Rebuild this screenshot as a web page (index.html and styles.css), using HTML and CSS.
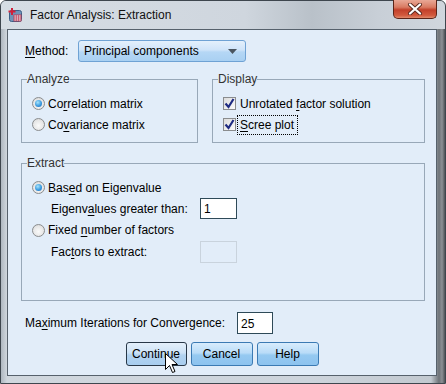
FILE: index.html
```html
<!DOCTYPE html>
<html lang="en">
<head>
  <meta charset="UTF-8">
  <title>Factor Analysis: Extraction</title>
  <link rel="stylesheet" href="styles.css">
</head>
<body>
  <div class="window">
    <div class="titlebar">
      <svg class="app-icon" width="15" height="16" viewBox="0 0 15 16">
        <rect x="1.5" y="3.5" width="12" height="11" rx="2" fill="#6f93b8" stroke="#3d5f86"/>
        <rect x="6" y="8" width="7" height="6" fill="#e8eef5" stroke="#c0304a" stroke-width="0.8"/>
        <path d="M6 10h7M6 12h7M8.3 8v6M10.6 8v6" stroke="#c0304a" stroke-width="0.7"/>
        <path d="M4 1v7M0.5 4.5h7" stroke="#d0203a" stroke-width="2"/>
      </svg>
      <span class="title">Factor Analysis: Extraction</span>
      <div class="close">
        <svg width="16" height="12" viewBox="0 0 16 12">
          <path d="M3 1.5l10 9M13 1.5l-10 9" stroke="#5a2a20" stroke-width="4" stroke-linecap="round"/>
          <path d="M3 1.5l10 9M13 1.5l-10 9" stroke="#fff" stroke-width="2.2" stroke-linecap="round"/>
        </svg>
      </div>
    </div>

    <div class="client">
      <div class="method-row">
        <span class="label"><u>M</u>ethod:</span>
        <div class="select">
          <span>Principal components</span>
          <svg width="9" height="5" viewBox="0 0 9 5"><path d="M0 0h9L4.5 5z" fill="#4a5560"/></svg>
        </div>
      </div>

      <div class="group-row">
        <fieldset class="group analyze">
          <legend>Analyze</legend>
          <div class="opt"><span class="radio checked"></span><span>Co<u>r</u>relation matrix</span></div>
          <div class="opt"><span class="radio"></span><span>Co<u>v</u>ariance matrix</span></div>
        </fieldset>
        <fieldset class="group display">
          <legend>Display</legend>
          <div class="opt"><span class="check"><svg width="11" height="11" viewBox="0 0 11 11"><path d="M1.5 5.5l3 3.5 5-8" fill="none" stroke="#1e2b82" stroke-width="2.2"/></svg></span><span>Unrotated <u>f</u>actor solution</span></div>
          <div class="opt"><span class="check"><svg width="11" height="11" viewBox="0 0 11 11"><path d="M1.5 5.5l3 3.5 5-8" fill="none" stroke="#1e2b82" stroke-width="2.2"/></svg></span><span class="focus"><u>S</u>cree plot</span></div>
        </fieldset>
      </div>

      <fieldset class="group extract">
        <legend>Extract</legend>
        <div class="opt"><span class="radio checked"></span><span>Bas<u>e</u>d on Eigenvalue</span></div>
        <div class="sub">
          <span class="sub-label">Eigenv<u>a</u>lues greater than:</span>
          <div class="field">1</div>
        </div>
        <div class="opt tall"><span class="radio"></span><span>Fixed <u>n</u>umber of factors</span></div>
        <div class="sub tall">
          <span class="sub-label">Fac<u>t</u>ors to extract:</span>
          <div class="field disabled"></div>
        </div>
      </fieldset>

      <div class="iter-row">
        <span>Ma<u>x</u>imum Iterations for Convergence:</span>
        <div class="field">25</div>
      </div>

      <div class="buttons">
        <button class="btn default">Continue</button>
        <button class="btn">Cancel</button>
        <button class="btn">Help</button>
      </div>
    </div>

    <svg class="cursor" width="13" height="21" viewBox="0 0 13 21">
      <path d="M0.5 0.5v16l4-4 3 7 2.5-1-3-7h5.5z" fill="#fff" stroke="#000" stroke-width="1"/>
    </svg>
  </div>
</body>
</html>
```

FILE: styles.css
```css
html, body {
  margin: 0;
  padding: 0;
}
body {
  width: 446px;
  height: 384px;
  overflow: hidden;
  font-family: "Liberation Sans", Arial, sans-serif;
  font-size: 12px;
  color: #000;
}
.window {
  position: relative;
  box-sizing: border-box;
  width: 446px;
  height: 384px;
  border: 1px solid #3e464e;
  border-radius: 6px 6px 0 0;
  background: linear-gradient(to right, #aeb7c0 0, #d0d7de 6px, #cdd4dc 70%, #c2c9d0 430px, #6e7378 438px, #8c9095 441px, #4e5256 100%);
  display: flex;
  flex-direction: column;
}
.titlebar {
  height: 28px;
  display: flex;
  align-items: center;
  padding-left: 7px;
  background: linear-gradient(to right, #d6dde4, #cfd6de 55%, #b9c1c9 70%, #c8cfd7 85%, #d0d6dd);
  border-radius: 5px 5px 0 0;
}
.app-icon {
  margin-top: -1px;
}
.title {
  margin-left: 7px;
  font-size: 12px;
  color: #111;
}
.close {
  margin-left: auto;
  margin-right: 8px;
  align-self: flex-start;
  margin-top: -1px;
  width: 44px;
  height: 19px;
  box-sizing: border-box;
  border: 1px solid #5b2418;
  border-top: none;
  border-radius: 0 0 5px 5px;
  background: linear-gradient(to bottom, #e9a896 0, #d97a62 40%, #c2402a 55%, #d2593d 85%, #e08a6c 100%);
  display: flex;
  align-items: center;
  justify-content: center;
}
.client {
  flex: 1;
  margin: 0 8px 7px 6px;
  border: 1px solid #56616c;
  background: #e2edf9;
  display: flex;
  flex-direction: column;
}
u {
  text-decoration: underline;
  text-underline-offset: 2px;
}
.method-row {
  display: flex;
  align-items: center;
  padding: 10px 0 0 17px;
  height: 22px;
}
.method-row .label {
  width: 53px;
}
.select {
  box-sizing: border-box;
  width: 168px;
  height: 22px;
  border: 1px solid #6fa2d4;
  border-radius: 3px;
  background: linear-gradient(to bottom, #e4f0fc 0, #cfe4f9 45%, #b5d7f5 55%, #a9d0f2 100%);
  display: flex;
  align-items: center;
  justify-content: space-between;
  padding: 0 8px 0 5px;
}
.group-row {
  display: flex;
  gap: 14px;
  margin: 10px 11px 0 13px;
}
.group {
  margin: 0;
  border: 1px solid #98a8b8;
  padding: 7px 0 7px 10px;
  min-width: 0;
}
.group legend {
  padding: 0;
  margin-left: -5px;
  line-height: 14px;
  color: #333;
}
.analyze {
  box-sizing: border-box;
  width: 177px;
}
.display {
  flex: 1;
}
.opt {
  display: flex;
  align-items: center;
  height: 21px;
}
.opt.tall {
  height: 22px;
}
.radio {
  position: relative;
  box-sizing: border-box;
  width: 13px;
  height: 13px;
  margin-right: 3px;
  border-radius: 50%;
  border: 1px solid #8a8c8e;
  background: radial-gradient(circle at 50% 60%, #fafafa 0, #e6e6e6 60%, #d0d0d0 100%);
}
.radio.checked::after {
  content: "";
  position: absolute;
  left: 2px;
  top: 2px;
  width: 7px;
  height: 7px;
  border-radius: 50%;
  background: radial-gradient(circle at 40% 35%, #a6e4fb 0, #3b9be0 55%, #1b63b4 100%);
}
.check {
  box-sizing: border-box;
  width: 13px;
  height: 13px;
  margin-right: 4px;
  border: 1px solid #8a8c8e;
  background: linear-gradient(135deg, #dcdcdc, #fbfbfb);
  display: flex;
  align-items: center;
  justify-content: center;
}
.focus {
  outline: 1px dotted #000;
  outline-offset: 2px;
  padding-right: 1px;
}
.extract {
  margin: 13px 11px 0 13px;
  padding-bottom: 37px;
}
.sub {
  display: flex;
  align-items: center;
  height: 21px;
  padding-left: 19px;
}
.sub.tall {
  height: 22px;
}
.sub-label {
  width: 149px;
}
.field {
  box-sizing: border-box;
  width: 37px;
  height: 21px;
  border: 1px solid #2e4a58;
  background: #fff;
  padding: 3px 0 0 3px;
}
.field.disabled {
  height: 22px;
  border-color: #c9d3dd;
  background: #e2edf9;
}
.iter-row {
  display: flex;
  align-items: center;
  margin: 11px 0 0 17px;
  height: 22px;
}
.iter-row span {
  width: 212px;
}
.iter-row .field {
  width: 36px;
  height: 22px;
  padding-top: 4px;
}
.buttons {
  display: flex;
  justify-content: center;
  gap: 4px;
  margin-top: 8px;
}
.btn {
  box-sizing: border-box;
  width: 62px;
  height: 24px;
  font-family: "Liberation Sans", Arial, sans-serif;
  font-size: 12px;
  color: #000;
  border: 1px solid #3b7ab3;
  border-radius: 3px;
  background: linear-gradient(to bottom, #d8ecfc 0, #b9dcf8 45%, #95c9f1 55%, #8dc3ef 100%);
  padding: 0;
}
.btn.default {
  width: 61px;
  border-color: #283848;
  background: linear-gradient(to bottom, #e4f0fb 0, #cde2f6 45%, #b1d2f0 55%, #a8cdef 100%);
}
.cursor {
  position: absolute;
  left: 164px;
  top: 352px;
}
```
